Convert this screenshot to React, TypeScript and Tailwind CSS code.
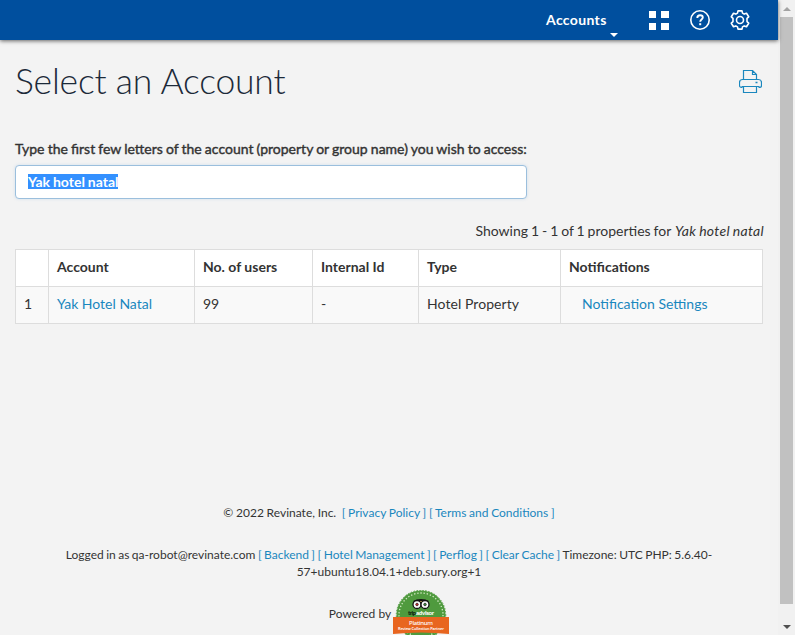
import React from "react";

const columns = ["", "Account", "No. of users", "Internal Id", "Type", "Notifications"];

function GearIcon() {
  return (
    <svg width="20" height="20" viewBox="0 0 20 20" fill="none" stroke="#fff" strokeWidth="1.6" strokeLinejoin="round">
      <path d="M8 .9h4l.5 2.200 1.700 1 2.300-.8 2.200 3.500-1.700 1.600v3.200l1.700 1.600-2.200 3.500-2.300-.8-1.700 1-.5 2.200H8l-.5-2.200-1.700-1-2.300.8-2.200-3.500L3 11.600V8.400L1.300 6.800l2.200-3.500 2.300.8 1.700-1z" />
      <circle cx="10" cy="10" r="3.500" />
    </svg>
  );
}

function HelpIcon() {
  return (
    <svg width="20" height="20" viewBox="0 0 20 20" fill="none" stroke="#fff">
      <circle cx="10" cy="10" r="9.200" strokeWidth="1.600" />
      <path d="M7.300 8c0-1.700 1.200-2.700 2.800-2.700s2.700.9 2.700 2.300c0 1.900-2.600 2-2.600 4.100" strokeWidth="1.900" />
      <path d="M9.200 13.200h2v2h-2z" fill="#fff" stroke="none" />
    </svg>
  );
}

function PrinterIcon() {
  return (
    <svg width="23" height="23" viewBox="0 0 23 23" fill="none" stroke="#1a87be" strokeWidth="1.200">
      <path d="M4.500 9.500v-9h9l4 4v5M13.500.5v4h4M3.500 17.500h-1a2 2 0 0 1-2-2v-3a3 3 0 0 1 3-3h16a3 3 0 0 1 3 3v3a2 2 0 0 1-2 2h-1M2.500 16.500h18M4.500 16.500v6h13v-6" />
      <path d="M16.500 12.500h2" strokeWidth="1.500" />
    </svg>
  );
}

function Badge() {
  return (
    <svg width="56" height="46" viewBox="0 0 56 46" className="block shrink-0">
      <circle cx="28" cy="25" r="24.500" fill="#4f9a3e" />
      <circle cx="28" cy="25" r="24.700" fill="none" stroke="#4f9a3e" strokeWidth="1" strokeDasharray="1.500 1.500" />
      <circle cx="28" cy="25" r="22" fill="none" stroke="#d5ebc6" strokeWidth="1.300" strokeDasharray="1.300 1.900" />
      <path d="M20 11q8-4 16 0l-3 3H23z" fill="#111" />
      <path d="M25 11h6l-3 5z" fill="#f3c95a" />
      <g fill="#fff" stroke="#111" strokeWidth="1.300">
        <circle cx="24" cy="14.500" r="4" />
        <circle cx="32" cy="14.500" r="4" />
      </g>
      <circle cx="24" cy="14.500" r="1.300" fill="#d0272c" stroke="#222" strokeWidth=".7" />
      <circle cx="32" cy="14.500" r="1.300" fill="#398e38" stroke="#222" strokeWidth=".7" />
      <text x="15" y="25" fontFamily="Lato, sans-serif" fontSize="6" fontWeight="900" fill="#10200e" textLength="8">trip</text>
      <text x="23" y="25" fontFamily="Lato, sans-serif" fontSize="6" fontWeight="900" fill="#fff" textLength="18">advisor</text>
      <path d="M0 27h56v17q-28-3-56 0z" fill="#e8651f" />
      <text x="28" y="34.500" fontFamily="Noto Sans, sans-serif" fontSize="6" fontWeight="500" fill="#fff" textAnchor="middle" textLength="24">Platinum</text>
      <text x="28" y="40" fontFamily="Noto Sans, sans-serif" fontSize="4" fontWeight="600" fill="#fff" textAnchor="middle" textLength="46">Review Collection Partner</text>
    </svg>
  );
}

function Link({ children }: { children: React.ReactNode }) {
  return <a className="text-[#1a87be]">{children}</a>;
}

export default function App() {
  return (
    <div className="flex h-[635px] w-[795px] overflow-hidden bg-[#f3f3f3] font-[Lato,sans-serif] text-[14px] leading-5 text-[#333]">
      <div className="flex w-[778px] flex-col">
        <header className="z-10 flex h-10 shrink-0 items-center bg-[#004f9e] pl-[546px] text-white shadow-[0_1px_4px_rgba(0,0,0,0.6)]">
          <div className="relative w-[103px] font-bold">
            <span className="inline-block tracking-[0.35px] whitespace-nowrap">Accounts</span>
            <i className="absolute top-[23px] left-[64px] border-x-4 border-t-4 border-x-transparent border-t-white" />
          </div>
          <div className="mr-[21px] grid w-5 grid-cols-[7px_8px] gap-[5px] pt-px">
            <i className="h-[7px] bg-white" />
            <i className="h-[7px] bg-white" />
            <i className="h-[7px] bg-white" />
            <i className="h-[7px] bg-white" />
          </div>
          <div className="mr-[20px]"><HelpIcon /></div>
          <GearIcon />
        </header>

        <div className="flex h-[99px] shrink-0 justify-between pt-[22px] pr-4 pl-[15px]">
          <h1 className="-mt-px text-[35.5px] leading-10 font-light tracking-[-0.2px] whitespace-nowrap text-[#1c2a39]">Select an Account</h1>
          <div className="pt-2"><PrinterIcon /></div>
        </div>

        <main className="flex h-[356px] shrink-0 flex-col px-[15px]">
          <label className="mb-[6px] text-[14px] [word-spacing:-0.45px] whitespace-nowrap [-webkit-text-stroke:0.4px_#333]">
            Type the first few letters of the account (property or group name) you wish to access:
          </label>
          <div className="flex h-[34px] w-[512px] items-center rounded-[4px] border border-[#9bbfdd] bg-white px-3 pb-[2px] shadow-[0_0_3px_rgba(100,160,220,0.25)]">
            <span className="bg-[#3390ff] leading-[15px] font-bold [word-spacing:-0.5px] whitespace-nowrap text-white">Yak hotel natal</span>
          </div>
          <p className="mt-[22px] -mr-px mb-2 text-right [word-spacing:-0.65px] whitespace-nowrap">
            Showing 1 - 1 of 1 properties for <em className="ml-px tracking-[0.3px]">Yak hotel natal</em>
          </p>
          <table className="w-[748px] table-fixed border-collapse border border-[#ddd] text-left">
            <colgroup>
              <col className="w-[33px]" />
              <col className="w-[146px]" />
              <col className="w-[118px]" />
              <col className="w-[106px]" />
              <col className="w-[142px]" />
              <col />
            </colgroup>
            <thead>
              <tr className="h-[37px] bg-white">
                {columns.map((name) => (
                  <th key={name} className="border border-[#ddd] px-2 pb-0.5 font-bold whitespace-nowrap">{name}</th>
                ))}
              </tr>
            </thead>
            <tbody>
              <tr className="h-[37px] bg-[#f9f9f9] [&>td]:border [&>td]:border-[#ddd] [&>td]:px-2 [&>td]:pb-0.5 [&>td]:whitespace-nowrap">
                <td>1</td>
                <td><Link>Yak Hotel Natal</Link></td>
                <td>99</td>
                <td>-</td>
                <td className="tracking-[0.07px]">Hotel Property</td>
                <td><span className="pl-[13px]"><Link>Notification Settings</Link></span></td>
              </tr>
            </tbody>
          </table>
        </main>

        <footer className="flex flex-col items-center pt-[9px] text-[12px] leading-[18px] whitespace-nowrap">
          <div className="mb-6 [word-spacing:-0.35px]">
            © 2022 Revinate, Inc. &nbsp;<Link>[ Privacy Policy ]</Link> <Link>[ Terms and Conditions ]</Link>
          </div>
          <div className="[word-spacing:-0.6px]">
            Logged in as qa-robot@revinate.com <Link>[ Backend ]</Link> <Link>[ Hotel Management ]</Link> <Link>[ Perflog ]</Link> <Link>[ Clear Cache ]</Link> Timezone: UTC PHP: 5.6.40-
          </div>
          <div className="-mt-px">57+ubuntu18.04.1+deb.sury.org+1</div>
          <div className="mt-[9px] flex items-center gap-[2px]">
            <span className="pt-[2px]">Powered by</span>
            <Badge />
          </div>
        </footer>
      </div>

      <div className="flex w-[17px] flex-col items-center justify-between bg-[#f1f1f1]">
        <div className="flex h-[17px] items-center"><i className="border-x-4 border-b-4 border-x-transparent border-b-[#a3a3a3]" /></div>
        <div className="mb-auto h-[587px] w-[13px] bg-[#c1c1c1]" />
        <div className="flex h-[17px] items-center"><i className="border-x-4 border-t-4 border-x-transparent border-t-[#505050]" /></div>
      </div>
    </div>
  );
}
